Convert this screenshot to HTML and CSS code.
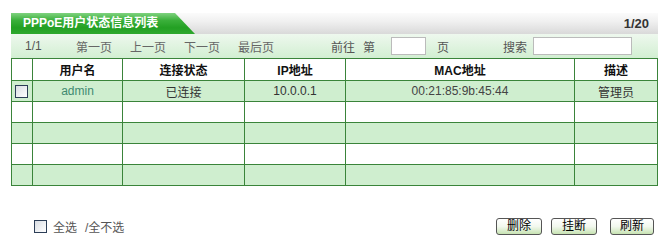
FILE: index.html
```html
<!DOCTYPE html>
<html lang="zh-CN">
<head>
  <meta charset="UTF-8">
  <title>PPPoE用户状态信息列表</title>
  <link rel="stylesheet" href="styles.css">
</head>
<body>
  <div class="panel">
    <div class="panel-head">
      <div class="tab">PPPoE用户状态信息列表</div>
      <div class="count">1/20</div>
    </div>

    <div class="toolbar">
      <span class="pages">1/1</span>
      <a class="nav first">第一页</a>
      <a class="nav">上一页</a>
      <a class="nav">下一页</a>
      <a class="nav">最后页</a>
      <span class="goto">前往</span>
      <span class="goto-di">第</span>
      <input class="page-input" type="text">
      <span class="goto-ye">页</span>
      <span class="search-label">搜索</span>
      <input class="search-input" type="text">
    </div>

    <table class="list">
      <colgroup>
        <col style="width:21px">
        <col style="width:90px">
        <col style="width:122px">
        <col style="width:101px">
        <col style="width:229px">
        <col>
      </colgroup>
      <thead>
        <tr>
          <th></th>
          <th>用户名</th>
          <th>连接状态</th>
          <th>IP地址</th>
          <th>MAC地址</th>
          <th>描述</th>
        </tr>
      </thead>
      <tbody>
        <tr class="odd">
          <td><span class="check"></span></td>
          <td class="user">admin</td>
          <td>已连接</td>
          <td>10.0.0.1</td>
          <td class="mac">00:21:85:9b:45:44</td>
          <td>管理员</td>
        </tr>
        <tr><td></td><td></td><td></td><td></td><td></td><td></td></tr>
        <tr class="odd"><td></td><td></td><td></td><td></td><td></td><td></td></tr>
        <tr><td></td><td></td><td></td><td></td><td></td><td></td></tr>
        <tr class="odd"><td></td><td></td><td></td><td></td><td></td><td></td></tr>
      </tbody>
    </table>

    <div class="footer">
      <div class="select-all">
        <span class="check"></span>
        <span>全选</span>
        <span class="slash">/全不选</span>
      </div>
      <div class="actions">
        <button class="btn">删除</button>
        <button class="btn">挂断</button>
        <button class="btn refresh">刷新</button>
      </div>
    </div>
  </div>
</body>
</html>
```

FILE: styles.css
```css
body {
  margin: 0;
  background: #fff;
  font-family: 'Liberation Sans', 'Noto Sans CJK SC', sans-serif;
  font-size: 12px;
  color: #333;
}
.panel {
  margin: 13px 0 0 11px;
  width: 647px;
}
.panel-head {
  display: flex;
  justify-content: space-between;
  align-items: center;
  height: 21px;
  background: linear-gradient(to bottom, #fbfbfb, #f0f0f0 40%, #d9d9d9);
}
.tab {
  width: 150px;
  height: 21px;
  line-height: 21px;
  padding-left: 12px;
  padding-right: 22px;
  color: #fff;
  font-weight: bold;
  font-size: 12px;
  background: linear-gradient(to bottom, #7fd27f, #3bb03b 35%, #23a023 70%, #2ea82e);
  clip-path: polygon(0 0, 164px 0, 100% 100%, 0 100%);
}
.count {
  padding-right: 9px;
  font-weight: bold;
  font-size: 13px;
  color: #333;
}
.toolbar {
  display: flex;
  align-items: center;
  height: 24px;
  background: linear-gradient(to bottom, #eef8ee, #d2efd2);
  color: #555;
}
.pages {
  margin-left: 14px;
  width: 51px;
}
.nav {
  width: 54px;
  color: #666;
}
.goto {
  margin-left: 39px;
  width: 32px;
}
.goto-di {
  width: 28px;
}
.page-input {
  box-sizing: border-box;
  width: 35px;
  height: 18px;
  border: 1px solid #bbb;
  margin: 0;
  padding: 0;
}
.goto-ye {
  margin-left: 11px;
  width: 66px;
}
.search-label {
  width: 30px;
}
.search-input {
  box-sizing: border-box;
  width: 99px;
  height: 18px;
  border: 1px solid #bbb;
  margin: 0;
  padding: 0;
}
.list {
  width: 647px;
  border-collapse: collapse;
  table-layout: fixed;
}
.list th,
.list td {
  border: 1px solid #3a843a;
  height: 20px;
  padding: 0;
  text-align: center;
  color: #333;
}
.list th {
  height: 21px;
  background: #fff;
  font-weight: bold;
  color: #111;
}
.list tr.odd td {
  background: #cfeecf;
}
.list td.user {
  color: #3f8a6f;
}
.list td.mac {
  color: #444;
}
.check {
  display: inline-block;
  box-sizing: border-box;
  width: 13px;
  height: 13px;
  border: 1px solid #2c3e57;
  background: linear-gradient(135deg, #d9dde3, #fff);
  vertical-align: middle;
}
.list .check {
  display: block;
  margin-left: 3px;
}
.footer {
  display: flex;
  justify-content: space-between;
  align-items: center;
  margin-top: 32px;
}
.select-all {
  display: flex;
  align-items: center;
  gap: 6px;
  margin-left: 23px;
  color: #555;
}
.slash {
  margin-left: 2px;
}
.actions {
  display: flex;
  gap: 9px;
  margin-right: 4px;
}
.btn {
  width: 46px;
  height: 17px;
  padding: 0;
  font-family: 'Liberation Sans', 'Noto Sans CJK SC', sans-serif;
  font-size: 12px;
  line-height: 15px;
  color: #000;
  border: 1px solid #555;
  border-radius: 3px;
  background: linear-gradient(to bottom, #fff, #f2f8ee 50%, #c7e3b2);
}
.btn.refresh {
  width: 44px;
  margin-left: 4px;
}
```
